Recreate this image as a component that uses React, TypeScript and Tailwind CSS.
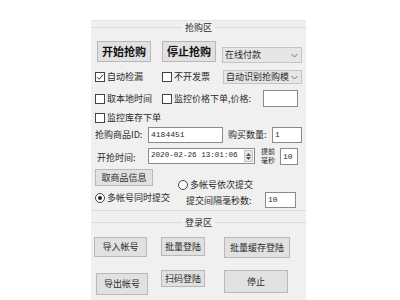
import React from "react";

const cjk = "font-['Microsoft_YaHei','Noto_Sans_CJK_SC',sans-serif]";
const mono = "font-['Liberation_Mono','Noto_Sans_CJK_SC',monospace]";

function Check({ checked, label, w }: { checked?: boolean; label: string; w?: string }) {
  return (
    <div className={`flex items-center gap-[2px] ${w ?? ""}`}>
      <span className="w-[10px] h-[10px] border border-[#444] bg-white flex items-center justify-center shrink-0">
        {checked && (
          <svg width="8" height="8" viewBox="0 0 8 8">
            <path d="M1 4.2 L3.1 6.3 L7 1.6" stroke="#333" strokeWidth="1" fill="none" />
          </svg>
        )}
      </span>
      <span className="whitespace-nowrap">{label}</span>
    </div>
  );
}

function Radio({ checked, label }: { checked?: boolean; label: string }) {
  return (
    <div className="flex items-center gap-[2px]">
      <span className="w-[10px] h-[10px] rounded-full border border-[#444] bg-white flex items-center justify-center shrink-0">
        {checked && <span className="w-[4px] h-[4px] rounded-full bg-[#222]" />}
      </span>
      <span className="whitespace-nowrap">{label}</span>
    </div>
  );
}

function Select({ text, cls }: { text: string; cls: string }) {
  return (
    <div className={`bg-[#e6e6e6] border border-[#c4c4c4] flex items-center pl-[2px] pr-[3px] ${cls}`}>
      <span className="flex-1 whitespace-nowrap overflow-hidden">{text}</span>
      <svg width="7" height="5" viewBox="0 0 7 5" className="shrink-0">
        <path d="M0.5 1 L3.5 4 L6.5 1" stroke="#777" strokeWidth="1" fill="none" />
      </svg>
    </div>
  );
}

function Btn({ children, cls }: { children: React.ReactNode; cls: string }) {
  return (
    <div className={`bg-[#e1e1e1] border border-[#b8b8b8] flex items-center justify-center whitespace-nowrap ${cls}`}>
      {children}
    </div>
  );
}

function Input({ value, cls }: { value?: string; cls: string }) {
  return (
    <div className={`bg-white border border-[#8a8a8a] flex items-center pl-[2px] text-[8px] ${mono} ${cls}`}>
      {value}
    </div>
  );
}

function GroupLabel({ text }: { text: string }) {
  return (
    <div className="h-[12px] flex items-center">
      <div className="flex-1 h-px bg-[#dadada]" />
      <span className="px-[3px] leading-none">{text}</span>
      <div className="flex-1 h-px bg-[#dadada]" />
    </div>
  );
}

export default function App() {
  return (
    <div className={`w-[400px] h-[300px] bg-white pl-[91px] pt-[20px] overflow-hidden ${cjk}`}>
      <div className="w-[215px] h-[280px] bg-[#f0f0f0] text-[9px] text-[#2a2a2a] flex flex-col border-t border-[#e4e4e4]">
        <GroupLabel text="抢购区" />

        {/* row 1 */}
        <div className="flex items-start mt-[8px] h-[21px]">
          <Btn cls="ml-[6px] w-[54px] h-[21px] text-[11px] font-bold text-[#111]">开始抢购</Btn>
          <Btn cls="ml-[11px] w-[54px] h-[21px] text-[11px] font-bold text-[#111]">停止抢购</Btn>
          <Select text="在线付款" cls="ml-[6px] mt-[6px] w-[80px] h-[16px]" />
        </div>

        {/* row 2 */}
        <div className="flex items-center mt-[8px] h-[14px]">
          <Check checked label="自动检漏" w="ml-[4px] w-[67px]" />
          <Check label="不开发票" w="w-[61px]" />
          <Select text="自动识别抢购模" cls="w-[79px] h-[14px]" />
        </div>

        {/* row 3 */}
        <div className="flex items-center mt-[6px] h-[17px]">
          <Check label="取本地时间" w="ml-[4px] w-[67px]" />
          <Check label="监控价格下单,价格:" w="w-[101px]" />
          <Input cls="w-[35px] h-[17px]" />
        </div>

        {/* row 4 */}
        <div className="flex items-center mt-[4px] h-[14px]">
          <Check label="监控库存下单" w="ml-[4px]" />
        </div>

        {/* row 5 */}
        <div className="flex items-center mt-[2px] h-[16px]">
          <span className="ml-[4px] w-[53px] whitespace-nowrap">抢购商品ID:</span>
          <Input value="4184451" cls="w-[75px] h-[16px]" />
          <span className="ml-[5px] w-[44px] whitespace-nowrap">购买数量:</span>
          <Input value="1" cls="w-[30px] h-[16px]" />
        </div>

        {/* row 6 */}
        <div className="flex items-start mt-[5px] h-[17px]">
          <span className="ml-[6px] w-[51px] mt-[3px] whitespace-nowrap">开抢时间:</span>
          <div className={`w-[107px] h-[16px] bg-white border border-[#8a8a8a] flex items-center pl-[2px] text-[7.6px] ${mono}`}>
            <span className="flex-1 whitespace-nowrap overflow-hidden">2020-02-26 13:01:06</span>
            <div className="w-[9px] h-[12px] mr-px bg-[#e6e6e6] border border-[#c4c4c4] flex flex-col items-center justify-center gap-[1px] shrink-0">
              <svg width="5" height="3" viewBox="0 0 5 3"><path d="M0 3 L2.5 0 L5 3 Z" fill="#555" /></svg>
              <svg width="5" height="3" viewBox="0 0 5 3"><path d="M0 0 L2.5 3 L5 0 Z" fill="#555" /></svg>
            </div>
          </div>
          <div className="ml-[6px] w-[18px] -mt-[1px] flex flex-col text-[7px] leading-[9px]">
            <span className="whitespace-nowrap">提前</span>
            <span className="whitespace-nowrap">毫秒</span>
          </div>
          <Input value="10" cls="ml-px w-[18px] h-[17px]" />
        </div>

        {/* row 7 */}
        <div className="flex items-start mt-[4px] h-[19px]">
          <Btn cls="ml-[4px] w-[58px] h-[17px]">取商品信息</Btn>
          <div className="ml-[25px] mt-[9px]">
            <Radio label="多帐号依次提交" />
          </div>
        </div>

        {/* row 8 */}
        <div className="flex items-start mt-[2px] h-[17px]">
          <div className="ml-[4px] mt-[1px] w-[91px]">
            <Radio checked label="多帐号同时提交" />
          </div>
          <span className="mt-[4px] w-[79px] whitespace-nowrap">提交间隔毫秒数:</span>
          <Input value="10" cls="mt-[2px] w-[31px] h-[16px]" />
        </div>

        <div className="mt-[3px] h-px bg-[#dadada]" />

        <div className="mt-[5px]">
          <GroupLabel text="登录区" />
        </div>

        {/* login row 1 */}
        <div className="flex items-start mt-[9px] h-[21px]">
          <Btn cls="ml-[3px] w-[53px] h-[20px]">导入帐号</Btn>
          <Btn cls="ml-[14px] w-[44px] h-[19px]">批量登陆</Btn>
          <Btn cls="ml-[19px] w-[66px] h-[21px]">批量缓存登陆</Btn>
        </div>

        {/* login row 2 */}
        <div className="flex items-start mt-[12px]">
          <Btn cls="ml-[5px] mt-[3px] w-[52px] h-[22px]">导出帐号</Btn>
          <Btn cls="ml-[13px] w-[44px] h-[17px]">扫码登陆</Btn>
          <Btn cls="ml-[19px] w-[64px] h-[23px]">停止</Btn>
        </div>
      </div>
    </div>
  );
}
